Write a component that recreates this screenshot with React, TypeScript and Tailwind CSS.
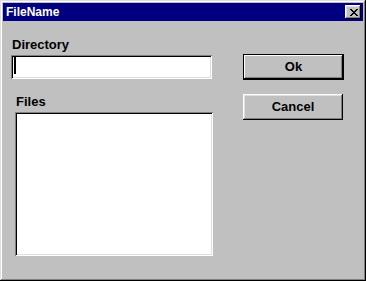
const font = { fontFamily: '"Liberation Sans", Arial, sans-serif' };

function CloseGlyph() {
  // 8x7 pixel X, like the old window manager glyph
  const rows = ['xx....xx', '.xx..xx.', '..xxxx..', '...xx...', '..xxxx..', '.xx..xx.', 'xx....xx'];
  return (
    <svg width="8" height="7" viewBox="0 0 8 7" shapeRendering="crispEdges">
      {rows.map((r, y) =>
        r.split('').map((c, x) => (c === 'x' ? <rect key={`${x}-${y}`} x={x} y={y} width="1" height="1" fill="#000" /> : null))
      )}
    </svg>
  );
}

const sunken =
  'shadow-[inset_1px_1px_#808080,inset_-1px_-1px_#fff,inset_2px_2px_#000,inset_-2px_-2px_#dfdfdf]';

export default function App() {
  return (
    <div
      className="w-[366px] h-[281px] bg-[#c0c0c0] p-[3px] flex flex-col shadow-[inset_-1px_-1px_#000,inset_1px_1px_#dfdfdf,inset_-2px_-2px_#808080,inset_2px_2px_#fff]"
      style={font}
    >
      {/* title bar */}
      <div className="h-[18px] bg-[#000080] flex items-center justify-between pl-[3px] pr-[2px]">
        <span className="text-white font-bold text-[12px] leading-[18px]">FileName</span>
        <div className="w-[16px] h-[14px] bg-[#c0c0c0] flex items-center justify-center pl-[1px] shadow-[inset_-1px_-1px_#000,inset_1px_1px_#fff,inset_-2px_-2px_#808080,inset_2px_2px_#dfdfdf]">
          <CloseGlyph />
        </div>
      </div>

      <div className="flex pl-[8px]">
        <div className="w-[202px] flex flex-col">
          <div className="mt-[16px] ml-[1px] h-[15px] leading-[15px] text-[13px] font-bold text-black">Directory</div>
          <div className={`mt-[3px] w-[201px] h-[24px] bg-white pl-[3px] pt-[2px] ${sunken}`}>
            <div className="w-[2px] h-[17px] bg-black" />
          </div>
          <div className="mt-[15px] ml-[5px] h-[15px] leading-[15px] text-[13px] font-bold text-black">Files</div>
          <div className={`mt-[3px] ml-[4px] w-[198px] h-[144px] bg-white ${sunken}`} />
        </div>

        <div className="ml-[30px] flex flex-col">
          <button className="mt-[33px] w-[101px] h-[26px] bg-[#c0c0c0] text-[13px] font-bold text-black flex items-center justify-center shadow-[inset_0_0_0_1px_#000,inset_-2px_-2px_#000,inset_2px_2px_#fff,inset_-3px_-3px_#808080]">
            Ok
          </button>
          <button className="mt-[14px] w-[100px] h-[26px] bg-[#c0c0c0] text-[13px] font-bold text-black flex items-center justify-center shadow-[inset_-1px_-1px_#000,inset_1px_1px_#fff,inset_-2px_-2px_#808080,inset_2px_2px_#dfdfdf]">
            Cancel
          </button>
        </div>
      </div>
    </div>
  );
}
